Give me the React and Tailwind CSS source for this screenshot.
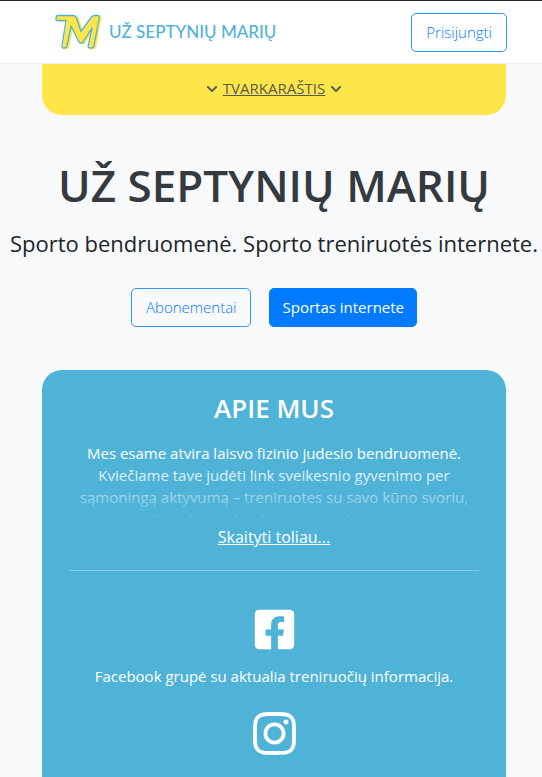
import { FaChevronDown, FaFacebookSquare, FaInstagram } from "react-icons/fa";

const M_PATH =
  "M3.500 2.500H19Q21 2.500 22 5L26.500 18.500L37 4Q38 2.500 40 2.500H43Q45 2.500 44.700 4.500L39.500 33Q39 35 37 35H35Q33.300 35 33.700 33L37.500 15L28.500 29Q26.500 31.500 24.500 29L16.500 13L12.500 33Q12 35 10 35H8.800Q7.200 35 7.500 33L11.500 7.500H3Q1.300 7.500 1.500 5.500Q1.600 2.500 3.500 2.500Z";

function Logo() {
  return (
    <svg width="46" height="38" viewBox="0 0 46 38" overflow="visible" aria-hidden="true">
      <path d={M_PATH} fill="#fde54a" stroke="#fde54a" strokeWidth="1.500" strokeLinejoin="round" transform="translate(1 0.500)" />
      <path d={M_PATH} fill="none" stroke="#4fb3d8" strokeWidth="1.300" strokeLinejoin="round" transform="translate(-0.500 0)" />
    </svg>
  );
}

function Header() {
  return (
    <header className="flex h-16 items-center justify-between border-t border-b border-t-[#212529] border-b-[#eceef0] bg-white pr-[35px] pl-[55px]">
      <a href="#top" className="flex items-center gap-2 font-['Lato',sans-serif] text-[17px] font-medium text-[#4fb3d8]">
        <Logo />
        UŽ SEPTYNIŲ MARIŲ
      </a>
      <button type="button" className="h-[39px] rounded-[5px] border border-[#3395ff] px-3.5 text-[15px] font-light text-[#007bff]">
        Prisijungti
      </button>
    </header>
  );
}

export default function App() {
  return (
    <div id="top" className="min-h-screen overflow-x-hidden bg-[#f8f9fb] font-['Open_Sans',sans-serif] text-[15px] text-[#212529]">
      <Header />
      <main className="flex flex-col pr-9 pl-[42px] text-center">
        <nav className="flex h-[51px] items-center justify-center gap-[5px] rounded-b-[20px] bg-[#fde54a] pb-0.5 text-[#545b50]">
          <FaChevronDown size={12} />
          <a href="#tvarkarastis" className="underline">TVARKARAŠTIS</a>
          <FaChevronDown size={12} />
        </nav>

        <h1 className="mt-10 text-[44px] leading-[60px] font-semibold whitespace-nowrap text-[#343a40]">
          UŽ SEPTYNIŲ MARIŲ
        </h1>
        <p className="-mx-9 mt-3 text-[22px] leading-8 whitespace-nowrap">
          Sporto bendruomenė. Sporto treniruotės internete.
        </p>

        <div className="mt-[29px] flex justify-center gap-[18px]">
          <button type="button" className="h-[39px] rounded-[5px] border border-[#3395ff] px-3.5 font-light text-[#007bff]">
            Abonementai
          </button>
          <button type="button" className="h-[39px] rounded-[5px] border border-[#007bff] bg-[#007bff] px-3 text-white">
            Sportas internete
          </button>
        </div>

        <section className="mt-[43px] flex flex-col items-center rounded-t-[20px] bg-[#4fb3d8] px-[27px] pt-5 text-white">
          <h2 className="text-[26px] leading-9 font-semibold">APIE MUS</h2>
          <div className="relative mt-4 h-[75px] overflow-hidden px-2 leading-[22px]">
            <p>
              Mes esame atvira laisvo fizinio judesio bendruomenė. Kviečiame tave judėti link sveikesnio
              gyvenimo per sąmoningą aktyvumą – treniruotes su savo kūno svoriu, ilgus žygius bei
              bėgimus po Lietuvą
            </p>
            <div className="absolute inset-0 bg-linear-to-b from-[#4fb3d8]/0 from-30% to-[#4fb3d8]/90" />
          </div>
          <a href="#apie" className="mt-2 text-[16px] leading-6 underline">Skaityti toliau...</a>
          <hr className="mt-[21px] w-full border-t border-[#84cae4]" />
          <a href="#facebook" aria-label="Facebook" className="mt-9">
            <FaFacebookSquare size={45} />
          </a>
          <p className="mt-[13px] leading-[22px]">Facebook grupė su aktualia treniruočių informacija.</p>
          <a href="#instagram" aria-label="Instagram" className="mt-[22px] pb-5">
            <FaInstagram size={49} />
          </a>
        </section>
      </main>
    </div>
  );
}
